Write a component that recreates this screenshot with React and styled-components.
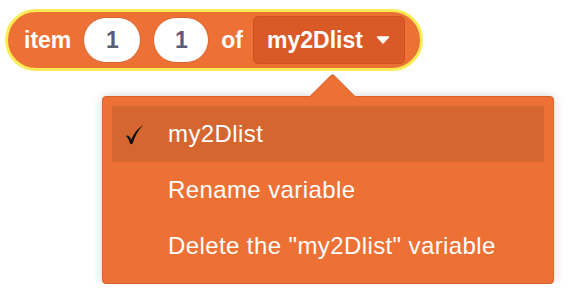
import React from 'react'
import styled, { createGlobalStyle } from 'styled-components'

const GlobalStyle = createGlobalStyle`
  html, body {
    margin: 0;
    padding: 0;
    background: #ffffff;
  }
  body {
    font-family: "Liberation Sans", Arial, Helvetica, sans-serif;
  }
`

const Page = styled.div`
  display: flex;
  flex-direction: column;
  align-items: flex-start;
  padding: 9px 0 0 5px;
`

const Block = styled.div`
  display: flex;
  align-items: center;
  gap: 12px;
  height: 56px;
  padding: 0 15px 0 16px;
  background: #ed7135;
  border: 3px solid #fbec55;
  border-radius: 31px;
  box-sizing: content-box;
`

const Label = styled.span`
  color: #ffffff;
  font-size: 23px;
  font-weight: 700;
  line-height: 1;
`

const NumberInput = styled.div`
  display: flex;
  align-items: center;
  justify-content: center;
  width: ${p => p.$w}px;
  height: 46px;
  box-sizing: border-box;
  background: #ffffff;
  border: 1px solid #d9612b;
  border-radius: 23px;
  color: #575e75;
  font-size: 23px;
  font-weight: 700;
`

const Dropdown = styled.div`
  display: flex;
  align-items: center;
  gap: 13px;
  height: 48px;
  box-sizing: border-box;
  padding: 0 14px 0 13px;
  margin-left: -2px;
  background: #d95a26;
  border: 1px solid #cf5322;
  border-radius: 5px;
  color: #ffffff;
  font-size: 23px;
  font-weight: 700;
`

const Menu = styled.div`
  position: relative;
  margin: 25px 0 0 97px;
  width: 452px;
  box-sizing: border-box;
  padding: 9px;
  background: #ed7035;
  border: 1px solid #d8622c;
  border-radius: 4px;
  box-shadow: 0 0 10px rgba(0, 0, 0, 0.18);

  &::before {
    content: '';
    position: absolute;
    top: -17px;
    left: 213px;
    width: 32px;
    height: 32px;
    background: #ed7035;
    border-top: 1px solid #d8622c;
    border-left: 1px solid #d8622c;
    border-top-left-radius: 4px;
    transform: rotate(45deg);
  }
`

const Item = styled.div`
  position: relative;
  display: flex;
  align-items: center;
  height: 56px;
  padding-left: 56px;
  background: ${p => (p.$active ? '#d5662f' : 'transparent')};
  color: #ffffff;
  font-size: 24px;
  letter-spacing: 0.4px;
`

const Check = styled.svg`
  position: absolute;
  left: 13px;
  top: 18px;
`

const Caret = () => (
  <svg width="14" height="8" viewBox="0 0 14 8">
    <path d="M1.5 1 L12.5 1 L7 7 Z" fill="#fff" stroke="#fff" strokeWidth="1.5" strokeLinejoin="round" />
  </svg>
)

export default function App() {
  return (
    <>
      <GlobalStyle />
      <Page>
        <Block>
          <Label>item</Label>
          <NumberInput $w={58}>1</NumberInput>
          <NumberInput $w={56}>1</NumberInput>
          <Label>of</Label>
          <Dropdown>
            my2Dlist
            <Caret />
          </Dropdown>
        </Block>
        <Menu>
          <Item $active>
            <Check width="19" height="21" viewBox="0 0 19 21">
              <path
                d="M1 12 C3 10.5 5 12.5 6.2 15.5 C8.8 9.5 12.5 4.5 18 1 C13 6.5 10 12 7.6 19.5 C6.8 20.4 5.4 20.4 5 19.4 C4.2 16.4 3 14 1 12 Z"
                fill="#111"
              />
            </Check>
            my2Dlist
          </Item>
          <Item>Rename variable</Item>
          <Item>Delete the "my2Dlist" variable</Item>
        </Menu>
      </Page>
    </>
  )
}
